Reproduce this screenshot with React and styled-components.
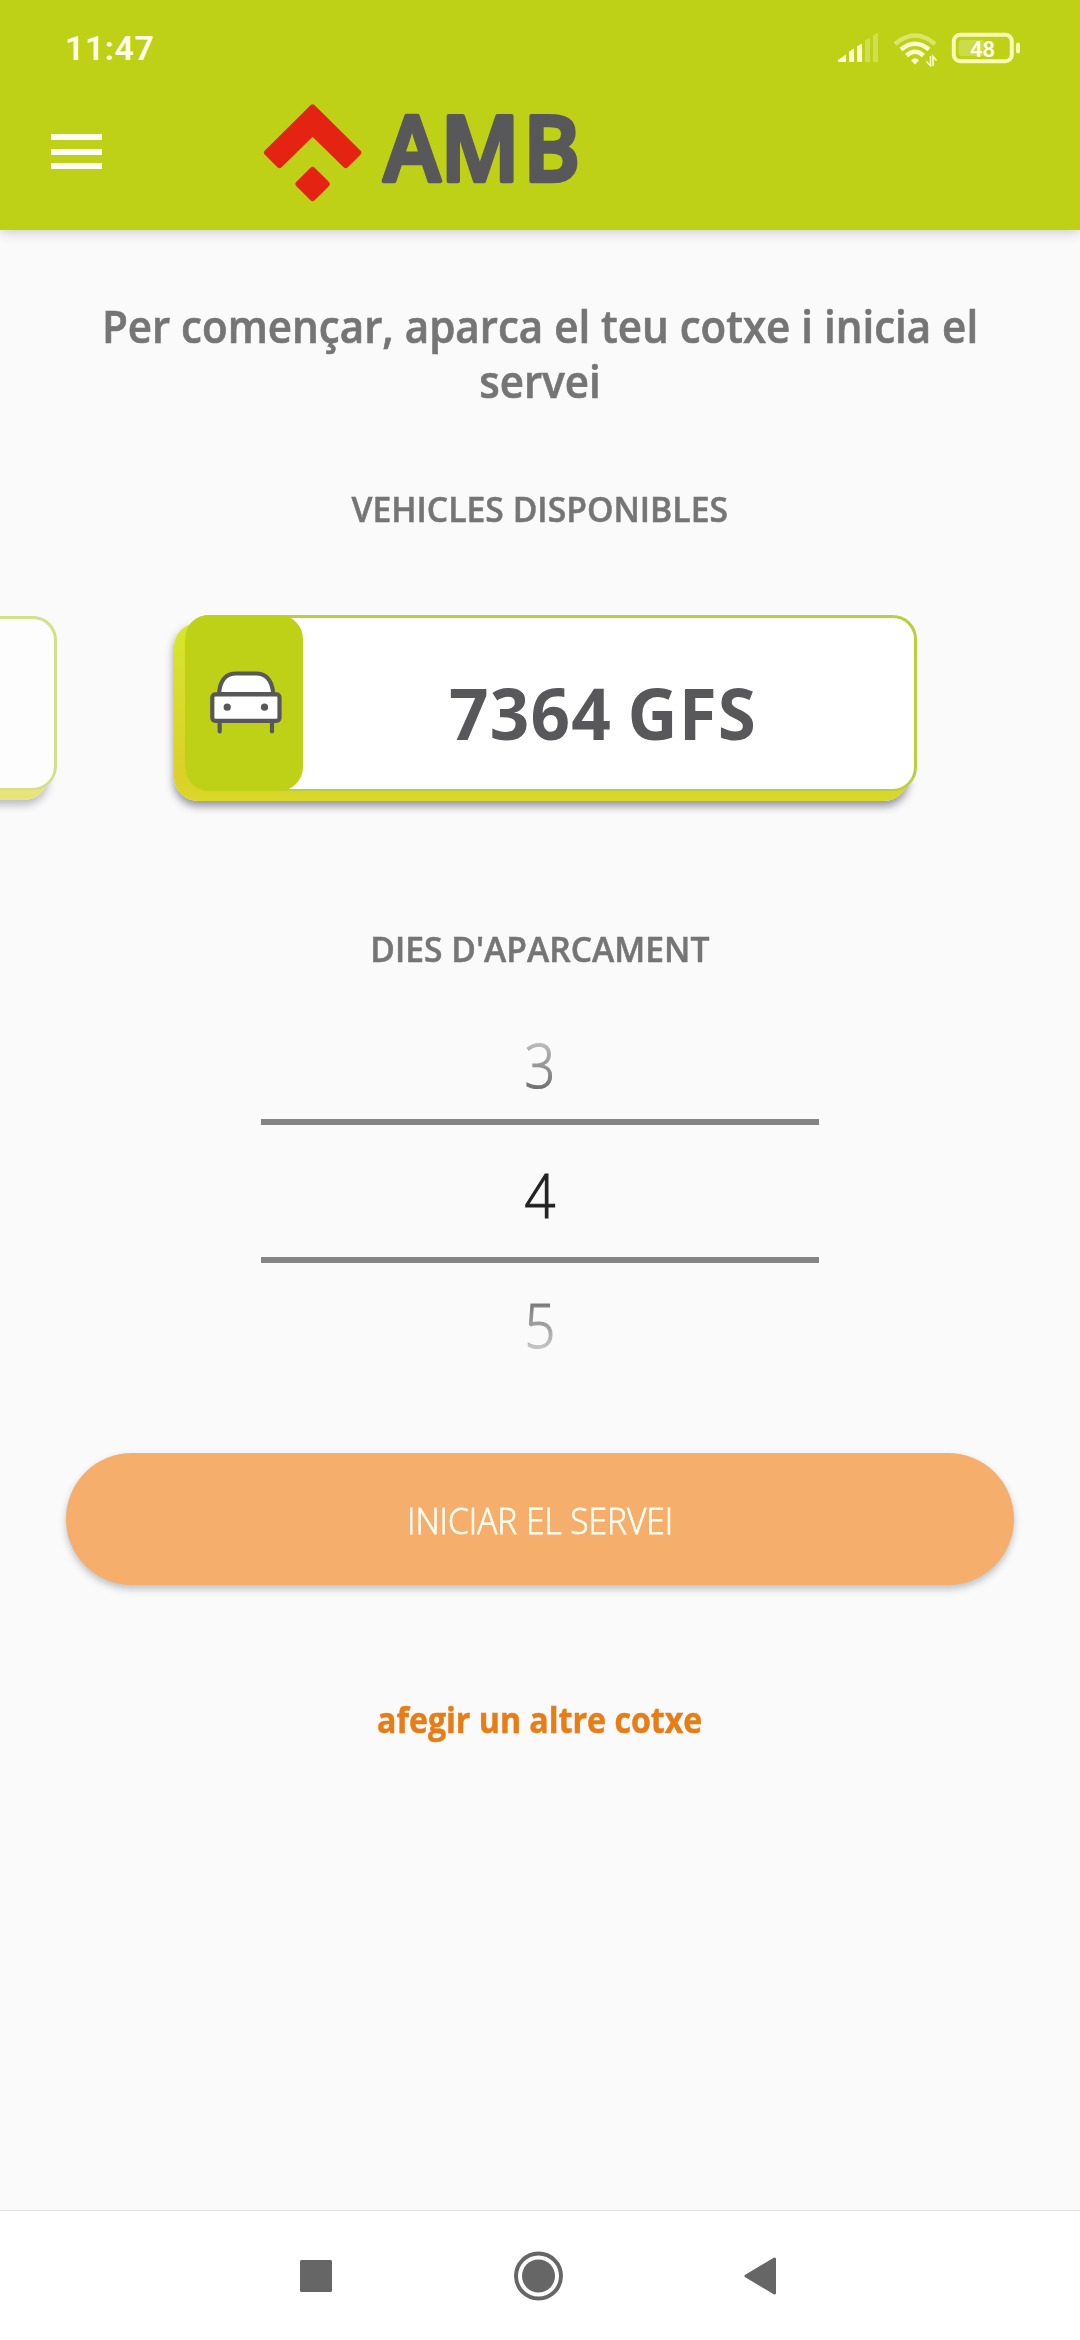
import styled, { createGlobalStyle } from 'styled-components'

const GlobalStyle = createGlobalStyle`
  * {
    box-sizing: border-box;
  }
  body {
    margin: 0;
    background: #fafafa;
  }
`

const Screen = styled.div`
  width: 1080px;
  height: 2340px;
  display: flex;
  flex-direction: column;
  align-items: center;
  overflow: hidden;
  background: #fafafa;
  font-family: 'Open Sans', 'Noto Sans', sans-serif;
`

const Header = styled.header`
  width: 100%;
  height: 230px;
  flex: none;
  background: #bed117;
  box-shadow: 0 2px 12px rgba(0, 0, 20, 0.2);
`

const StatusBar = styled.div`
  height: 96px;
  padding: 0 60px 0 65px;
  display: flex;
  align-items: center;
  justify-content: space-between;
`

const Clock = styled.span`
  font-family: Roboto, sans-serif;
  font-size: 34px;
  font-weight: 600;
  line-height: 96px;
  letter-spacing: 0.5px;
  color: #fffff0;
`

const Toolbar = styled.div`
  height: 134px;
  padding: 5px 0 0 51px;
  display: flex;
  align-items: flex-start;
  gap: 161px;
`

const MenuButton = styled.button`
  width: 51px;
  height: 35px;
  margin-top: 33px;
  padding: 0;
  border: none;
  background: none;
  display: flex;
  flex-direction: column;
  justify-content: space-between;
`

const MenuLine = styled.span`
  width: 51px;
  height: 6px;
  background: #fffff5;
`

const Title = styled.h1`
  width: 1020px;
  margin: 68px 0 0;
  font-size: 46px;
  font-weight: 600;
  line-height: 55px;
  text-align: center;
  transform: scaleX(0.915);
  -webkit-text-stroke: 0.7px #757575;
  color: #757575;
`

const Label = styled.h2`
  margin: ${(p) => p.$top}px 0 0;
  font-size: 34.5px;
  font-weight: 600;
  line-height: 48px;
  transform: scaleX(${(p) => p.$narrow});
  -webkit-text-stroke: 0.5px #757575;
  color: #757575;
`

const Carousel = styled.div`
  width: 100%;
  height: 176px;
  margin-top: 82px;
  display: flex;
  flex: none;
  align-items: center;
  gap: 128px;
`

const Card = styled.div`
  position: relative;
  z-index: 0;
  width: 732px;
  height: ${(p) => (p.$side ? 174 : 176)}px;
  margin-left: ${(p) => (p.$side ? '-675px' : '0')};
  flex: none;
  display: flex;
  opacity: ${(p) => (p.$side ? 0.6 : 1)};

  /* coloured plate under the card */
  &::before {
    content: '';
    position: absolute;
    z-index: -1;
    inset: 8px 9px -10px -11px;
    border-radius: 24px;
    background: linear-gradient(#d6e62c, #dcd029 85%, #d8d928);
    box-shadow: 0 5px 8px rgba(40, 40, 60, 0.5);
  }
`

const CardFace = styled.div`
  flex: 1;
  display: flex;
  border: solid #b9cf3c;
  border-width: 3px 3px 2px 0;
  border-radius: 24px;
  background: #fff;
`

const CardTab = styled.div`
  width: 118px;
  height: 176px;
  margin: -3px 0 -2px;
  flex: none;
  border-radius: 24px;
  background: #bed117;
  padding: 56px 0 0 25px;
`

const Plate = styled.span`
  flex: 1;
  padding: 0 11px 0 0;
  font-size: 71px;
  font-weight: 700;
  line-height: 189px;
  letter-spacing: 1.2px;
  word-spacing: -4px;
  text-align: center;
  white-space: nowrap;
  transform: scaleX(0.975);
  color: #58585a;
`

const Picker = styled.div`
  width: 558px;
  margin-top: 48px;
  display: flex;
  flex-direction: column;
  text-align: center;
`

const Day = styled.div`
  height: ${(p) => p.$height}px;
  font-size: 60px;
  font-weight: 300;
  line-height: ${(p) => p.$line}px;
  transform: scaleX(0.9);
  -webkit-text-stroke: 1.2px transparent;
  color: transparent;
  background: ${(p) => p.$fill};
  background-clip: text;
`

const Divider = styled.div`
  height: 6px;
  background: #848484;
`

const StartButton = styled.button`
  width: 948px;
  height: 132px;
  flex: none;
  margin-top: 69px;
  padding: 3px 0 0;
  border: none;
  border-radius: 66px;
  background: #f6ae6c;
  box-shadow: 0 4px 7px rgba(30, 50, 60, 0.28);
  font-family: inherit;
  font-size: 36px;
  font-weight: 300;
  color: #fffdf0;
`

const ButtonText = styled.span`
  display: inline-block;
  transform: scaleX(0.93);
  -webkit-text-stroke: 0.8px #fffdf0;
`

const AddLink = styled.a`
  margin-top: 109px;
  font-size: 35.5px;
  font-weight: 700;
  line-height: 50px;
  transform: scaleX(0.905);
  -webkit-text-stroke: 0.5px #e77d16;
  color: #e77d16;
`

const NavBar = styled.nav`
  width: 100%;
  height: 130px;
  margin-top: auto;
  padding: 0 304px 0 300px;
  border-top: 1px solid #e2e2e2;
  background: #fff;
  display: flex;
  align-items: center;
  justify-content: space-between;
`

const LogoSvg = styled.svg`
  overflow: visible;

  text {
    font-size: 90px;
    font-weight: 600;
  }
`

const StatusIcons = () => (
  <svg width="184" height="40" viewBox="836 28 184 40">
    {/* signal */}
    <g fill="#fdffdc">
      <path d="M838 62v-2l8-5.500v7.500z" />
      <path d="M849 62V51.500l5-3V62z" />
      <path d="M857 62V46.500l5-3V62z" />
      <path d="M865 62V40.500l5-3V62z" opacity="0.3" />
      <path d="M873 62V35.500l5-3V62z" opacity="0.3" />
    </g>
    {/* wifi */}
    <g fill="none" stroke="#fbffd0" strokeWidth="4.500">
      <path d="M895 44Q915 27 935 44" opacity="0.45" />
      <path d="M901 49.500Q915 38 929 49.500" />
      <path d="M906.500 55.500Q915 48 923.500 55.500" />
    </g>
    <path d="M911 60.500Q915 56 919 60.500L915 64.500z" fill="#fbffd0" />
    <path d="M930.500 56v9.500l-4-4M933 66v-9.500l3.500 4" stroke="#fbffd0" strokeWidth="1.600" fill="none" />
    {/* battery */}
    <rect x="959" y="40" width="25" height="16" rx="2" fill="#fff" opacity="0.22" />
    <rect x="953.800" y="34.800" width="58" height="26.500" rx="6.500" fill="none" stroke="#f8fbb8" strokeWidth="4" />
    <rect x="1016" y="42.500" width="4" height="11" rx="2" fill="#f8fbb8" />
    <text x="982.500" y="56.800" textAnchor="middle" fontFamily="Roboto, sans-serif" fontWeight="600" fontSize="22" fill="#fffff0">48</text>
  </svg>
)

const Logo = () => (
  <LogoSvg width="320" height="104" viewBox="263 101 320 104">
    <g fill="#e52313" stroke="#e52313" strokeWidth="6" strokeLinejoin="round">
      <path d="M312.600 107.500L267 152.700L279.500 165L312.600 132.500L345.700 165L358.300 152.700z" />
      <path d="M312.600 170L298.500 184L312.600 198L326.700 184z" />
    </g>
    <text x="404 464 551" y="181" transform="scale(0.95 1)" fill="#58585a" stroke="#58585a" strokeWidth="4.500" strokeLinejoin="round">AMB</text>
  </LogoSvg>
)

const CarIcon = () => (
  <svg width="74" height="66" viewBox="210 671 74 66">
    <g fill="#fff" stroke="#58585a" strokeWidth="4.200">
      <path d="M219.200 694V691.500Q221.500 673.500 236 673.500H256Q270.500 673.500 273 691.500V694z" />
      <rect x="212.300" y="694.300" width="67.200" height="26.500" rx="3" />
      <path d="M219.700 722v9.500M272 722v9.500" strokeLinecap="round" />
    </g>
    <circle cx="227.200" cy="707.200" r="3.600" fill="#58585a" />
    <circle cx="264.500" cy="707.200" r="3.600" fill="#58585a" />
  </svg>
)

const RecentIcon = () => (
  <svg width="32" height="32">
    <rect width="32" height="32" rx="1.500" fill="#666" />
  </svg>
)

const HomeIcon = () => (
  <svg width="50" height="50">
    <circle cx="25.500" cy="25" r="22.500" fill="none" stroke="#666" strokeWidth="4" />
    <circle cx="25.500" cy="25" r="16.500" fill="#666" />
  </svg>
)

const BackIcon = () => (
  <svg width="32" height="38">
    <path d="M2 19L30.500 2V36z" fill="#666" stroke="#666" strokeWidth="3" strokeLinejoin="round" />
  </svg>
)

const App = () => {
  return (
    <>
      <GlobalStyle />
      <Screen>
        <Header>
          <StatusBar>
            <Clock>11:47</Clock>
            <StatusIcons />
          </StatusBar>
          <Toolbar>
            <MenuButton>
              <MenuLine />
              <MenuLine />
              <MenuLine />
            </MenuButton>
            <Logo />
          </Toolbar>
        </Header>

        <Title>Per començar, aparca el teu cotxe i inicia el servei</Title>

        <Label $top={77} $narrow={0.977}>VEHICLES DISPONIBLES</Label>
        <Carousel>
          <Card $side>
            <CardFace />
          </Card>
          <Card>
            <CardFace>
              <CardTab>
                <CarIcon />
              </CardTab>
              <Plate>7364 GFS</Plate>
            </CardFace>
          </Card>
        </Carousel>

        <Label $top={134} $narrow={0.975}>DIES D'APARCAMENT</Label>
        <Picker>
          <Day $height={98} $line={89} $fill="linear-gradient(#d5d5d5, #b8b8b8 24px, #707070 68px)">3</Day>
          <Divider />
          <Day $height={132} $line={140} $fill="#212121">4</Day>
          <Divider />
          <Day $height={121} $line={124} $fill="linear-gradient(#7a7a7a 41px, #c2c2c2 84px)">5</Day>
        </Picker>

        <StartButton>
          <ButtonText>INICIAR EL SERVEI</ButtonText>
        </StartButton>
        <AddLink>afegir un altre cotxe</AddLink>

        <NavBar>
          <RecentIcon />
          <HomeIcon />
          <BackIcon />
        </NavBar>
      </Screen>
    </>
  )
}

export default App
